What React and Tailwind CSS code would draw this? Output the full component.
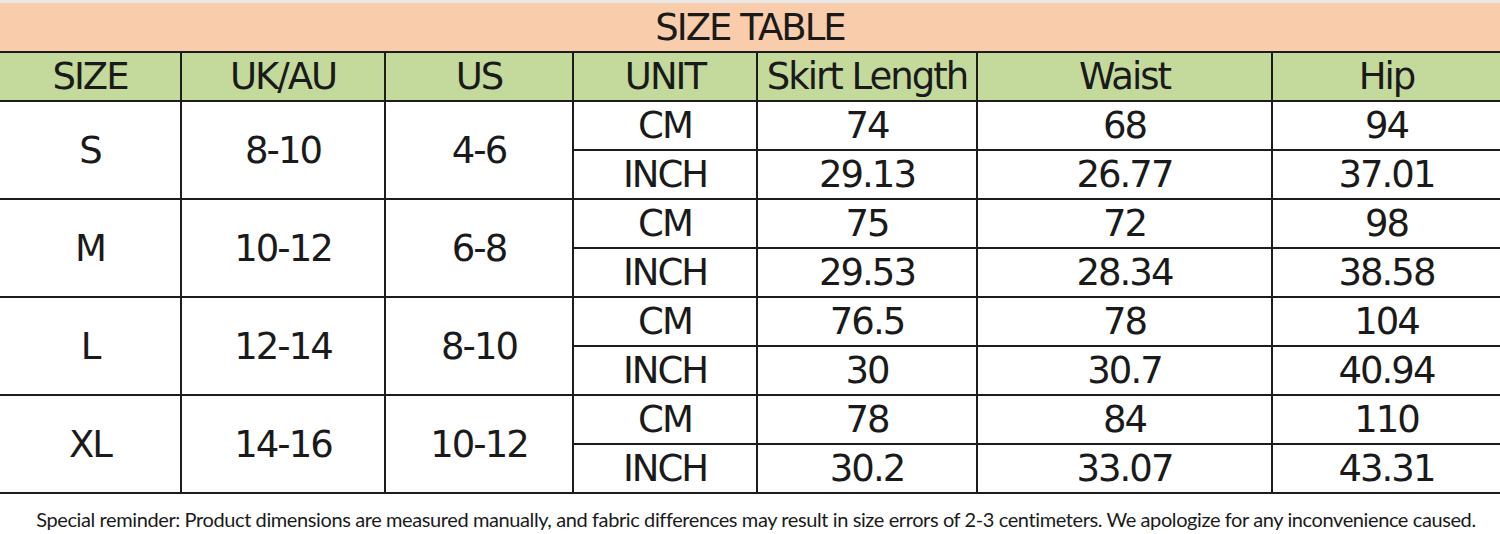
const rows = [
  { size: "S", uk: "8-10", us: "4-6", cm: ["74", "68", "94"], inch: ["29.13", "26.77", "37.01"] },
  { size: "M", uk: "10-12", us: "6-8", cm: ["75", "72", "98"], inch: ["29.53", "28.34", "38.58"] },
  { size: "L", uk: "12-14", us: "8-10", cm: ["76.5", "78", "104"], inch: ["30", "30.7", "40.94"] },
  { size: "XL", uk: "14-16", us: "10-12", cm: ["78", "84", "110"], inch: ["30.2", "33.07", "43.31"] },
];

const headers = ["SIZE", "UK/AU", "US", "UNIT", "Skirt Length", "Waist", "Hip"];

const tableFont = { fontFamily: '"DejaVu Sans", sans-serif' };

function Cell({ children, last, tall, className = "" }) {
  return (
    <div
      className={`flex items-center justify-center border-b-2 border-[#1c1c1c] leading-none ${
        last ? "" : "border-r-2"
      } ${tall ? "row-span-2 h-[98px]" : "h-[49px]"} ${className}`}
    >
      {children}
    </div>
  );
}

export default function App() {
  return (
    <div className="w-[1500px] h-[534px] bg-white text-[#1a1a1a] overflow-hidden">
      {/* title band */}
      <div
        className="h-[53px] flex items-center justify-center bg-[#f9ccac] border-t-[3px] border-t-[#e8e8e8] border-b-2 border-b-[#1c1c1c] text-[37px] tracking-[-2px] leading-none"
        style={tableFont}
      >
        SIZE TABLE
      </div>

      {/* table */}
      <div
        className="grid grid-cols-[182px_204px_188px_184px_220px_295px_227px] auto-rows-[49px] text-[37px] tracking-[-2px]"
        style={tableFont}
      >
        {headers.map((h, i) => (
          <Cell key={h} last={i === 6} className="bg-[#c4d99c]">
            {h}
          </Cell>
        ))}

        {rows.map((r) => (
          <div key={r.size} className="contents">
            <Cell tall>{r.size}</Cell>
            <Cell tall>{r.uk}</Cell>
            <Cell tall>{r.us}</Cell>
            <Cell>CM</Cell>
            <Cell>{r.cm[0]}</Cell>
            <Cell>{r.cm[1]}</Cell>
            <Cell last>{r.cm[2]}</Cell>
            <Cell className="col-start-4">INCH</Cell>
            <Cell>{r.inch[0]}</Cell>
            <Cell>{r.inch[1]}</Cell>
            <Cell last>{r.inch[2]}</Cell>
          </div>
        ))}
      </div>

      {/* footnote */}
      <div
        className="h-[40px] flex items-center justify-center pt-[10px] pl-[12px] text-[20px] tracking-[-0.4px] leading-none whitespace-nowrap"
        style={{ fontFamily: 'Lato, "Open Sans", sans-serif' }}
      >
        Special reminder: Product dimensions are measured manually, and fabric differences may result in size errors of 2-3 centimeters. We apologize for any inconvenience caused.
      </div>
    </div>
  );
}
